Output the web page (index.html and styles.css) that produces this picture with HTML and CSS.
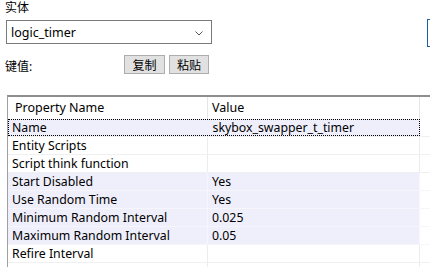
FILE: index.html
```html
<!DOCTYPE html>
<html lang="zh-CN">
<head>
    <meta charset="UTF-8">
    <title>实体属性</title>
    <link rel="stylesheet" href="styles.css">
</head>
<body>
    <div class="label">实体</div>
    <div class="combo-row">
        <div class="combo">
            <span>logic_timer</span>
            <svg class="chevron" width="8" height="5" viewBox="0 0 8 5"><path d="M0.5 0.5 L4 4 L7.5 0.5" fill="none" stroke="#555" stroke-width="1"/></svg>
        </div>
        <div class="side-btn"></div>
    </div>
    <div class="key-row">
        <span class="key-label">键值:</span>
        <div class="buttons">
            <button class="btn">复制</button>
            <button class="btn">粘贴</button>
        </div>
    </div>

    <div class="grid">
        <div class="row header">
            <div class="cell name">Property Name</div>
            <div class="cell value">Value</div>
            <div class="cell rest"></div>
        </div>
        <div class="row selected">
            <div class="sel">
                <div class="cell name">Name</div>
                <div class="cell value">skybox_swapper_t_timer</div>
            </div>
            <div class="cell rest"></div>
        </div>
        <div class="row">
            <div class="cell name">Entity Scripts</div>
            <div class="cell value"></div>
            <div class="cell rest"></div>
        </div>
        <div class="row">
            <div class="cell name">Script think function</div>
            <div class="cell value"></div>
            <div class="cell rest"></div>
        </div>
        <div class="row hl">
            <div class="cell name">Start Disabled</div>
            <div class="cell value">Yes</div>
            <div class="cell rest"></div>
        </div>
        <div class="row hl">
            <div class="cell name">Use Random Time</div>
            <div class="cell value">Yes</div>
            <div class="cell rest"></div>
        </div>
        <div class="row hl">
            <div class="cell name">Minimum Random Interval</div>
            <div class="cell value">0.025</div>
            <div class="cell rest"></div>
        </div>
        <div class="row hl">
            <div class="cell name">Maximum Random Interval</div>
            <div class="cell value">0.05</div>
            <div class="cell rest"></div>
        </div>
        <div class="row">
            <div class="cell name">Refire Interval</div>
            <div class="cell value"></div>
            <div class="cell rest"></div>
        </div>
        <div class="row last">
            <div class="cell name"></div>
            <div class="cell value"></div>
            <div class="cell rest"></div>
        </div>
    </div>
</body>
</html>
```

FILE: styles.css
```css
body {
    margin: 0;
    width: 430px;
    height: 267px;
    overflow: hidden;
    background-color: #fff;
    font-family: "Noto Sans", "Noto Sans CJK SC", sans-serif;
    font-size: 12px;
    color: #000;
}
.label {
    padding-left: 5px;
    height: 15px;
    line-height: 15px;
}
.combo-row {
    display: flex;
    justify-content: space-between;
    align-items: flex-start;
    margin-top: 5px;
    height: 24px;
}
.combo {
    margin-left: 6px;
    width: 206px;
    height: 24px;
    border: 1px solid #7a7a7a;
    display: flex;
    align-items: center;
    justify-content: space-between;
    padding: 0 8px 0 4px;
    box-sizing: border-box;
    font-size: 12.5px;
}
.chevron {
    margin-top: 2px;
}
.side-btn {
    width: 20px;
    height: 28px;
    margin-top: -1px;
    margin-right: -17px;
    border: 1px solid #1c5ea8;
    border-right: none;
    box-sizing: border-box;
}
.key-row {
    display: flex;
    align-items: flex-end;
    margin-top: 11px;
    height: 19px;
}
.key-label {
    padding-left: 5px;
    width: 119px;
    line-height: 14px;
}
.buttons {
    display: flex;
    gap: 4px;
}
.btn {
    margin: 0;
    padding: 0;
    width: 41px;
    height: 19px;
    background-color: #e1e1e1;
    border: 1px solid #adadad;
    font-family: "Noto Sans CJK SC", sans-serif;
    font-size: 12px;
    line-height: 16px;
}
.btn:last-child {
    width: 40px;
}
.grid {
    margin-top: 21px;
    margin-left: 7px;
    border-top: 2px solid #8e8e8e;
    border-left: 1px solid #a0a0a0;
}
.row {
    display: flex;
    height: 18px;
    border-bottom: 1px solid #f0f0f0;
    box-sizing: border-box;
}
.cell {
    line-height: 17px;
    white-space: nowrap;
    overflow: hidden;
    font-size: 12.3px;
}
.cell.name {
    width: 200px;
    padding-left: 4px;
    border-right: 1px solid #ececec;
    box-sizing: border-box;
}
.cell.value {
    width: 212px;
    padding-left: 4px;
    border-right: 1px solid #ececec;
    box-sizing: border-box;
}
.cell.rest {
    flex: 1;
}
.row.header {
    height: 22px;
    border-bottom: none;
}
.row.header .cell {
    line-height: 21px;
    font-size: 12.5px;
}
.row.header .cell.name {
    padding-left: 7px;
}
.row.header .cell.name,
.row.header .cell.value {
    border-right-color: #e6e6e6;
}
.row.hl .cell.name,
.row.hl .cell.value {
    background-color: #efeffc;
    border-right-color: #f6f6fc;
}
.row.hl {
    border-bottom-color: #f5f5fb;
}
.sel {
    display: flex;
    width: 412px;
    border: 1px dotted #000;
    background-color: #efeffc;
    box-sizing: border-box;
}
.sel .cell {
    line-height: 15px;
    border-right: none;
}
.sel .cell.name {
    padding-left: 3px;
}
.sel .cell.value {
    width: 211px;
}
```
